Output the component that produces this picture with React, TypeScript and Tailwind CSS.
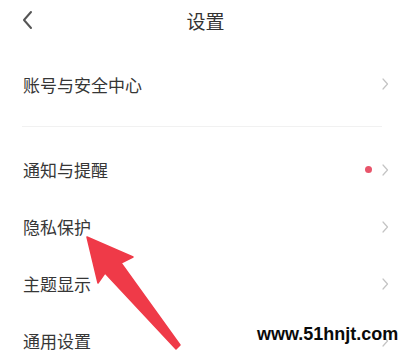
import React from "react";

const Chevron = () => (
  <svg width="8" height="12" viewBox="0 0 8 12" className="shrink-0">
    <path d="M2 1 L6.5 6 L2 11" fill="none" stroke="#c4c4c4" strokeWidth="1.2" strokeLinecap="round" strokeLinejoin="round" />
  </svg>
);

const Row = ({ label, dot, h = "h-[57px]" }: { label: string; dot?: boolean; h?: string }) => (
  <div className={`${h} flex items-center justify-between pl-[23px] pr-[15px]`}>
    <span className="text-[17px] text-[#363636] leading-none">{label}</span>
    <div className="flex items-center gap-[9px]">
      {dot && <span className="w-[7px] h-[7px] rounded-full bg-[#e8546a]" />}
      <Chevron />
    </div>
  </div>
);

export default function App() {
  return (
    <div
      className="relative w-[404px] h-[360px] overflow-hidden bg-white"
      style={{ fontFamily: '"Noto Sans CJK SC", "Noto Sans", sans-serif' }}
    >
      <div className="relative h-[40px] flex items-center justify-center pl-[7px]">
        <svg width="14" height="20" viewBox="0 0 14 20" className="absolute left-[20px] top-[10px]">
          <path d="M11 2 L4 10 L11 18" fill="none" stroke="#555555" strokeWidth="2" strokeLinecap="round" strokeLinejoin="round" />
        </svg>
        <span className="text-[19px] text-[#333333] leading-none">设置</span>
      </div>
      <div className="pt-[15px]">
        <Row label="账号与安全中心" h="h-[58px]" />
      </div>
      <div className="mt-[13px] mx-[22px] h-px bg-[#f1f1f1]" />
      <div className="pt-[14px]">
        <Row label="通知与提醒" dot />
        <Row label="隐私保护" />
        <Row label="主题显示" />
        <Row label="通用设置" />
      </div>

      <svg className="absolute left-0 top-0 pointer-events-none" width="404" height="360" viewBox="0 0 404 360">
        <polygon
          points="87,237 133,257 121,263 180,345 176,349 105,273 98,283"
          fill="#ef3a48"
          strokeLinejoin="round"
          stroke="#ef3a48"
          strokeWidth="1.5"
        />
      </svg>
      <div
        className="absolute left-[257px] top-[325px] text-[18px] font-bold text-[#0a0a0a] leading-none"
        style={{ fontFamily: '"Liberation Sans", Arial, sans-serif' }}
      >
        www.51hnjt.com
      </div>
    </div>
  );
}
